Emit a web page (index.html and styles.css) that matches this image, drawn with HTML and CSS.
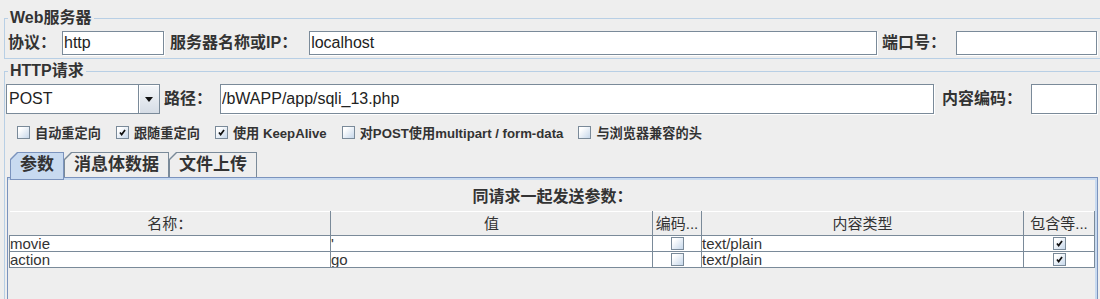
FILE: index.html
```html
<!DOCTYPE html>
<html lang="zh-CN">
<head>
    <meta charset="UTF-8">
    <title>HTTP请求</title>
    <link rel="stylesheet" href="styles.css">
</head>
<body>
    <fieldset class="group server-group">
        <legend>Web服务器</legend>
        <div class="form-row">
            <label class="label">协议：</label>
            <input class="field field-protocol" type="text" value="http">
            <label class="label label-server">服务器名称或IP：</label>
            <input class="field field-grow field-host" type="text" value="localhost">
            <label class="label label-port">端口号：</label>
            <input class="field field-port" type="text" value="">
        </div>
    </fieldset>

    <fieldset class="group request-group">
        <legend>HTTP请求</legend>
        <div class="form-row tall">
            <div class="combo">
                <span class="combo-value">POST</span>
                <span class="combo-arrow"><span class="arrow-down"></span></span>
            </div>
            <label class="label label-path">路径：</label>
            <input class="field field-grow field-path" type="text" value="/bWAPP/app/sqli_13.php">
            <label class="label label-encoding">内容编码：</label>
            <input class="field field-encoding" type="text" value="">
        </div>

        <div class="options">
            <span class="option"><span class="check"></span>自动重定向</span>
            <span class="option"><span class="check checked"><svg viewBox="0 0 13 13"><path d="M3.5 6.5 L5.5 9 L9.5 3.5"/></svg></span>跟随重定向</span>
            <span class="option"><span class="check checked"><svg viewBox="0 0 13 13"><path d="M3.5 6.5 L5.5 9 L9.5 3.5"/></svg></span>使用 KeepAlive</span>
            <span class="option"><span class="check"></span>对POST使用multipart / form-data</span>
            <span class="option"><span class="check"></span>与浏览器兼容的头</span>
        </div>

        <div class="tabs">
            <div class="tab selected"><span>参数</span></div>
            <div class="tab"><span>消息体数据</span></div>
            <div class="tab"><span>文件上传</span></div>
        </div>

        <div class="tab-panel">
            <div class="panel-title">同请求一起发送参数：</div>
            <div class="table-wrap">
                <table class="params">
                    <colgroup>
                        <col style="width: 321px">
                        <col style="width: 322px">
                        <col style="width: 49px">
                        <col style="width: 322px">
                        <col style="width: 71px">
                    </colgroup>
                    <thead>
                        <tr>
                            <th>名称：</th>
                            <th>值</th>
                            <th>编码...</th>
                            <th>内容类型</th>
                            <th>包含等...</th>
                        </tr>
                    </thead>
                    <tbody>
                        <tr>
                            <td>movie</td>
                            <td>'</td>
                            <td class="center"><span class="check"></span></td>
                            <td>text/plain</td>
                            <td class="center"><span class="check checked"><svg viewBox="0 0 13 13"><path d="M3.5 6.5 L5.5 9 L9.5 3.5"/></svg></span></td>
                        </tr>
                        <tr>
                            <td>action</td>
                            <td>go</td>
                            <td class="center"><span class="check"></span></td>
                            <td>text/plain</td>
                            <td class="center"><span class="check checked"><svg viewBox="0 0 13 13"><path d="M3.5 6.5 L5.5 9 L9.5 3.5"/></svg></span></td>
                        </tr>
                    </tbody>
                </table>
            </div>
        </div>
    </fieldset>
</body>
</html>
```

FILE: styles.css
```css
body {
    margin: 0;
    height: 299px;
    overflow: hidden;
    background: #eeeeee;
    color: #333333;
    font-family: "Liberation Sans", "Noto Sans CJK SC", sans-serif;
}

/* titled borders */
.group {
    margin: 0 -8px 0 4px;
    padding: 3px 10px 3px 3px;
    border: 1px solid #b8cfe5;
    min-width: 0;
}
.group legend {
    padding: 0 2px;
    font-size: 16px;
    line-height: 20px;
    font-weight: bold;
    color: #333333;
}
.server-group {
    margin-top: 8px;
}
.request-group {
    margin-top: 2px;
    padding-left: 1px;
    padding-bottom: 0;
}
.request-group legend {
    margin-left: 2px;
}

/* form rows */
.form-row {
    display: flex;
    align-items: center;
    height: 24px;
}
.form-row.tall {
    height: 30px;
}
.label {
    font-size: 16px;
    line-height: 20px;
    font-weight: bold;
    white-space: nowrap;
}
.field {
    box-sizing: border-box;
    height: 24px;
    margin: 0;
    padding: 0 1px;
    border: 1px solid #7a8a99;
    box-shadow: 1px 1px 0 #ffffff;
    background: #ffffff;
    color: #222222;
    font-family: "Liberation Sans", sans-serif;
    font-size: 16px;
    outline: none;
}
.tall .field {
    height: 30px;
}
.field-grow {
    flex: 1;
    min-width: 0;
}
.field-protocol {
    width: 102px;
    margin-left: 6px;
}
.label-server {
    margin-left: 6px;
}
.field-host {
    margin-left: 12px;
}
.label-port {
    margin-left: 5px;
}
.field-port {
    width: 141px;
    margin-left: 10px;
}

/* combo box */
.combo {
    box-sizing: border-box;
    display: flex;
    width: 154px;
    height: 30px;
    border: 1px solid #7a8a99;
    background: #ffffff;
}
.combo-value {
    flex: 1;
    padding-left: 2px;
    font-size: 16px;
    line-height: 28px;
    color: #222222;
}
.combo-arrow {
    display: flex;
    align-items: center;
    justify-content: center;
    width: 20px;
    border-left: 1px solid #7a8a99;
    background: linear-gradient(#f4f6f9, #d6dde6);
    box-shadow: inset 1px 1px 0 #ffffff;
}
.arrow-down {
    width: 0;
    height: 0;
    border-left: 4px solid transparent;
    border-right: 4px solid transparent;
    border-top: 5px solid #111111;
}
.label-path {
    margin-left: 4px;
}
.field-path {
    margin-left: 8px;
}
.label-encoding {
    margin-left: 8px;
}
.field-encoding {
    width: 66px;
    margin-left: 9px;
}

/* check boxes */
.options {
    display: flex;
    align-items: center;
    gap: 15px;
    height: 19px;
    margin-top: 9px;
    padding-left: 11px;
}
.option {
    display: flex;
    align-items: center;
    gap: 5px;
    font-size: 13.2px;
    font-weight: bold;
    white-space: nowrap;
}
.check {
    box-sizing: border-box;
    display: inline-block;
    width: 13px;
    height: 13px;
    border: 1px solid #7a8a99;
    background: linear-gradient(135deg, #ffffff 20%, #c6d7ea);
    vertical-align: top;
}
.check svg {
    display: block;
    width: 11px;
    height: 11px;
}
.check path {
    fill: none;
    stroke: #111111;
    stroke-width: 2;
}

/* tabs */
.tabs {
    display: flex;
    height: 25px;
    margin-top: 10px;
    padding-left: 4px;
}
.tab {
    padding: 1px 1px 0 1px;
    background: #7a8a99;
    clip-path: polygon(0 7px, 7px 0, 100% 0, 100% 100%, 0 100%);
}
.tab span {
    display: block;
    height: 24px;
    padding: 0 9px;
    background: #eeeeee;
    clip-path: polygon(0 7px, 7px 0, 100% 0, 100% 100%, 0 100%);
    font-size: 17px;
    line-height: 24px;
    font-weight: bold;
}
.tab.selected {
    position: relative;
    z-index: 1;
    height: 27px;
    background: #7b93bd;
}
.tab.selected span {
    height: 26px;
    background: #c8daf0;
}

.tab-panel {
    height: 121px;
    margin: 0 -1px 0 1px;
    border: 1px solid #7b93bd;
    box-shadow: inset 0 2px 0 #c8daf0, inset -2px 0 0 #c8daf0;
}
.panel-title {
    padding-top: 8px;
    font-size: 16px;
    line-height: 22px;
    font-weight: bold;
    text-align: center;
}
.table-wrap {
    margin-top: 3px;
    padding: 0 2px 0 1px;
}

/* parameter table */
.params {
    width: 100%;
    table-layout: fixed;
    border-collapse: collapse;
    font-size: 15px;
}
.params th {
    box-sizing: border-box;
    height: 24px;
    padding: 0;
    border-top: 1px solid #ffffff;
    border-right: 1px solid #7a8a99;
    border-bottom: 1px solid #7a8a99;
    font-weight: normal;
    line-height: 22px;
    white-space: nowrap;
    overflow: hidden;
    color: #333333;
}
.params td {
    height: 14px;
    padding: 1px 0 0 0;
    border: 1px solid #7a8a99;
    background: #ffffff;
    line-height: 14px;
    white-space: nowrap;
    overflow: hidden;
    color: #333333;
}
.params td.center {
    text-align: center;
    padding-top: 0;
}
```
